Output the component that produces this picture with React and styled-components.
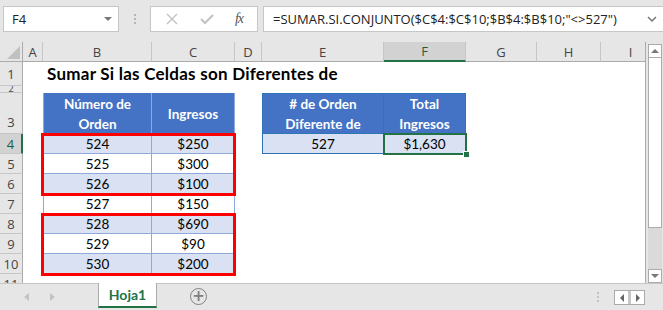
import styled, { createGlobalStyle } from "styled-components";

const GlobalStyle = createGlobalStyle`
  html, body { margin: 0; padding: 0; background: #fff; }
  body { width: 663px; height: 310px; overflow: hidden; font-family: "Open Sans", sans-serif; }
`;

const GREEN = "#217346";
const CELL_FONT = `Lato, "Open Sans", sans-serif`;

const COLS = ["A", "B", "C", "D", "E", "F", "G", "H", "I"];
const ROWS = [1, 2, 3, 4, 5, 6, 7, 8, 9, 10, 11];

const ORDERS = [
  ["524", "$250"],
  ["525", "$300"],
  ["526", "$100"],
  ["527", "$150"],
  ["528", "$690"],
  ["529", "$90"],
  ["530", "$200"],
];

const Window = styled.div`
  width: 663px;
  height: 310px;
  display: flex;
  flex-direction: column;
  background: #e6e6e6;
  overflow: hidden;
`;

/* ---------- formula bar ---------- */
const FormulaBar = styled.div`
  height: 42px;
  flex: none;
  display: flex;
  align-items: flex-start;
  padding: 6px 0 0 3px;
  box-sizing: border-box;
`;

const NameBox = styled.div`
  width: 116px;
  height: 26px;
  box-sizing: border-box;
  background: #fff;
  border: 1px solid #c6c6c6;
  display: flex;
  align-items: center;
  justify-content: space-between;
  padding: 0 6px 0 8px;
  font-size: 13px;
  color: #222;
`;

const Caret = styled.span`
  width: 0;
  height: 0;
  border-left: 4px solid transparent;
  border-right: 4px solid transparent;
  border-top: 4px solid #777;
`;

const Grip = styled.div`
  width: 31px;
  height: 26px;
  display: flex;
  flex-direction: column;
  align-items: center;
  justify-content: center;
  gap: 2px;
  span {
    width: 2px;
    height: 2px;
    background: #b4b4b4;
  }
`;

const FxBox = styled.div`
  width: 108px;
  height: 26px;
  box-sizing: border-box;
  background: #fff;
  border: 1px solid #c6c6c6;
  display: flex;
  align-items: center;
  justify-content: space-around;
  padding: 0 4px;
`;

const FxLabel = styled.span`
  font-family: "Liberation Serif", serif;
  font-style: italic;
  font-size: 14px;
  color: #555;
  letter-spacing: -1px;
`;

const FormulaInput = styled.div`
  flex: 1;
  height: 26px;
  margin-left: 5px;
  box-sizing: border-box;
  background: #fff;
  border: 1px solid #c6c6c6;
  border-right: none;
  display: flex;
  align-items: center;
  justify-content: space-between;
  padding: 0 6px 0 9px;
  font-size: 13px;
  color: #222;
  white-space: nowrap;
`;

/* ---------- sheet ---------- */
const Main = styled.div`
  height: 241px;
  flex: none;
  display: flex;
`;

const Sheet = styled.div`
  width: 646px;
  height: 241px;
  box-sizing: border-box;
  border-right: 1px solid #ababab;
  overflow: hidden;
  background: #fff;
  display: grid;
  grid-template-columns: 23px 20px 109px 83px 27px 122px 82px 71px 64px 60px;
  grid-template-rows: 20px 24px 7px 41px repeat(8, 20px);
`;

const Corner = styled.div`
  grid-column: 1;
  grid-row: 1;
  background: #e6e6e6;
  border-right: 1px solid #ababab;
  border-bottom: 1px solid #ababab;
  box-sizing: border-box;
  display: flex;
  align-items: flex-end;
  justify-content: flex-end;
  padding: 0 2px 2px 0;
  &::after {
    content: "";
    width: 0;
    height: 0;
    border-left: 13px solid transparent;
    border-bottom: 13px solid #c0c0c0;
  }
`;

const ColHead = styled.div`
  grid-column: ${(p) => p.$c};
  grid-row: 1;
  box-sizing: border-box;
  background: ${(p) => (p.$sel ? "#d2d2d2" : "#e6e6e6")};
  border-right: 1px solid #c6c6c6;
  border-bottom: ${(p) => (p.$sel ? `2px solid ${GREEN}` : "1px solid #ababab")};
  display: flex;
  align-items: center;
  justify-content: center;
  font-size: 13px;
  color: ${(p) => (p.$sel ? "#1d5c38" : "#444")};
`;

const RowHead = styled.div`
  grid-column: 1;
  grid-row: ${(p) => p.$r};
  box-sizing: border-box;
  background: ${(p) => (p.$sel ? "#d2d2d2" : "#e6e6e6")};
  border-bottom: 1px solid #c6c6c6;
  border-right: ${(p) => (p.$sel ? `2px solid ${GREEN}` : "1px solid #ababab")};
  display: flex;
  align-items: ${(p) => (p.$tall ? "flex-end" : "center")};
  justify-content: center;
  padding-bottom: ${(p) => (p.$tall ? "3px" : "0")};
  overflow: hidden;
  font-size: ${(p) => (p.$short ? "9px" : "13px")};
  line-height: ${(p) => (p.$short ? "6px" : "16px")};
  color: ${(p) => (p.$sel ? "#1d5c38" : "#444")};
`;

const Title = styled.div`
  grid-column: 3 / span 6;
  grid-row: 2;
  display: flex;
  align-items: flex-end;
  padding: 0 0 2px 4px;
  font-family: ${CELL_FONT};
  font-weight: 700;
  font-size: 17px;
  letter-spacing: 0.25px;
  color: #000;
  white-space: nowrap;
`;

const HeadCell = styled.div`
  grid-column: ${(p) => p.$c};
  grid-row: ${(p) => p.$r};
  box-sizing: border-box;
  background: #4472c4;
  border-right: 1px solid ${(p) => p.$line};
  border-left: ${(p) => (p.$first ? `1px solid ${p.$line}` : "none")};
  border-top: ${(p) => (p.$outer ? `1px solid ${p.$line}` : "none")};
  display: flex;
  align-items: center;
  justify-content: center;
  text-align: center;
  font-family: ${CELL_FONT};
  font-weight: 700;
  font-size: 13.5px;
  line-height: 20px;
  color: #fff;
`;

const DataCell = styled.div`
  grid-column: ${(p) => p.$c};
  grid-row: ${(p) => p.$r};
  box-sizing: border-box;
  background: ${(p) => (p.$alt ? "#d9e1f2" : "#fff")};
  border-right: 1px solid ${(p) => p.$line};
  border-bottom: 1px solid ${(p) => p.$line};
  border-left: ${(p) => (p.$first ? `1px solid ${p.$line}` : "none")};
  border-top: 1px solid ${(p) => p.$line};
  margin-top: -1px;
  display: flex;
  align-items: center;
  justify-content: center;
  padding-top: 1px;
  font-family: ${CELL_FONT};
  font-size: 13.5px;
  color: #000;
`;

const RedBox = styled.div`
  grid-column: 3 / span 2;
  grid-row: ${(p) => p.$r} / span ${(p) => p.$span};
  margin: -1px -1px -2px -2px;
  border: 3px solid #ff0000;
  z-index: 2;
  pointer-events: none;
`;

const Selection = styled.div`
  grid-column: 7;
  grid-row: 5;
  margin: -1px -1px -1px -1px;
  border: 2px solid ${GREEN};
  z-index: 3;
  position: relative;
  &::after {
    content: "";
    position: absolute;
    right: -5px;
    bottom: -5px;
    width: 5px;
    height: 5px;
    background: ${GREEN};
    border: 1px solid #fff;
  }
`;

/* ---------- vertical scroll ---------- */
const VScroll = styled.div`
  flex: 1;
  display: flex;
  flex-direction: column;
  align-items: center;
  padding: 2px 0 0 1px;
  background: #e6e6e6;
`;

const ScrollBtn = styled.div`
  width: 14px;
  height: 14px;
  flex: none;
  box-sizing: border-box;
  background: #fff;
  border: 1px solid #ababab;
  display: flex;
  align-items: center;
  justify-content: center;
  &::after {
    content: "";
    border-left: 4px solid transparent;
    border-right: 4px solid transparent;
    ${(p) => (p.$up ? "border-bottom: 4px solid #777;" : "border-top: 4px solid #777;")}
  }
`;

const Thumb = styled.div`
  width: 14px;
  height: 170px;
  box-sizing: border-box;
  background: #fff;
  border: 1px solid #ababab;
  border-top: none;
`;

const Track = styled.div`
  flex: 1;
  width: 14px;
  background: #dadada;
`;

/* ---------- sheet tabs ---------- */
const TabBar = styled.div`
  flex: 1;
  display: flex;
  align-items: flex-start;
  border-top: 1px solid #c6c6c6;
  box-sizing: border-box;
`;

const TabNav = styled.div`
  width: 98px;
  height: 26px;
  display: flex;
  align-items: center;
  padding-left: 24px;
  gap: 21px;
  box-sizing: border-box;
`;

const NavArrow = styled.span`
  width: 0;
  height: 0;
  border-top: 4px solid transparent;
  border-bottom: 4px solid transparent;
  ${(p) => (p.$left ? "border-right: 5px solid #c2c2c2;" : "border-left: 5px solid #c2c2c2;")}
`;

const Tab = styled.div`
  width: 59px;
  height: 25px;
  margin-top: -1px;
  box-sizing: border-box;
  background: #fff;
  border-left: 1px solid #ababab;
  border-right: 1px solid #ababab;
  border-bottom: 2px solid ${GREEN};
  display: flex;
  align-items: center;
  justify-content: center;
  font-family: ${CELL_FONT};
  font-weight: 700;
  font-size: 14px;
  color: ${GREEN};
`;

const AddSheet = styled.div`
  width: 17px;
  height: 17px;
  margin: 4px 0 0 33px;
  box-sizing: border-box;
  border: 1.5px solid #808080;
  border-radius: 50%;
  display: flex;
  align-items: center;
  justify-content: center;
  font-family: "DejaVu Sans", sans-serif;
  font-size: 15px;
  font-weight: 700;
  line-height: 1;
  color: #808080;
`;

const Spacer = styled.div`
  flex: 1;
`;

const Dots = styled(Grip)`
  width: 4px;
  height: 26px;
  margin-right: 14px;
  span {
    background: #c2c2c2;
  }
`;

const HScrollBtns = styled.div`
  display: flex;
  margin: 6px 18px 0 0;
  height: 15px;
  border: 1px solid #ababab;
  box-sizing: border-box;
  background: #c6c6c6;
  gap: 3px;
`;

const HBtn = styled.div`
  width: 13px;
  background: #fff;
  display: flex;
  align-items: center;
  justify-content: center;
  &::after {
    content: "";
    border-top: 4px solid transparent;
    border-bottom: 4px solid transparent;
    ${(p) => (p.$left ? "border-right: 4px solid #666;" : "border-left: 4px solid #666;")}
  }
`;

function Table1() {
  const line = "#8ea9db";
  return (
    <>
      <HeadCell $c={3} $r={4} $line={line} $first>
        Número de
        <br />
        Orden
      </HeadCell>
      <HeadCell $c={4} $r={4} $line={line}>
        Ingresos
      </HeadCell>
      {ORDERS.flatMap(([num, amt], i) => [
        <DataCell key={`n${i}`} $c={3} $r={5 + i} $line={line} $alt={i % 2 === 0} $first>
          {num}
        </DataCell>,
        <DataCell key={`a${i}`} $c={4} $r={5 + i} $line={line} $alt={i % 2 === 0}>
          {amt}
        </DataCell>,
      ])}
    </>
  );
}

function Table2() {
  const line = "#2f75b5";
  return (
    <>
      <HeadCell $c={6} $r={4} $line={line} $first $outer>
        # de Orden
        <br />
        Diferente de
      </HeadCell>
      <HeadCell $c={7} $r={4} $line={line} $outer>
        Total
        <br />
        Ingresos
      </HeadCell>
      <DataCell $c={6} $r={5} $line={line} $alt $first>
        527
      </DataCell>
      <DataCell $c={7} $r={5} $line={line} $alt>
        $1,630
      </DataCell>
    </>
  );
}

export default function App() {
  return (
    <Window>
      <GlobalStyle />
      <FormulaBar>
        <NameBox>
          F4
          <Caret />
        </NameBox>
        <Grip>
          <span />
          <span />
          <span />
        </Grip>
        <FxBox>
          <svg width="14" height="14" viewBox="0 0 14 14">
            <path d="M2 2 L12 12 M12 2 L2 12" stroke="#c2c2c2" strokeWidth="1.4" fill="none" />
          </svg>
          <svg width="16" height="14" viewBox="0 0 16 14">
            <path d="M2 7 L6 11 L14 3" stroke="#c2c2c2" strokeWidth="2" fill="none" />
          </svg>
          <FxLabel>fx</FxLabel>
        </FxBox>
        <FormulaInput>
          =SUMAR.SI.CONJUNTO($C$4:$C$10;$B$4:$B$10;"&lt;&gt;527")
          <svg width="10" height="8" viewBox="0 0 10 8">
            <path d="M1 2 L5 6 L9 2" stroke="#777" strokeWidth="1.5" fill="none" />
          </svg>
        </FormulaInput>
      </FormulaBar>

      <Main>
        <Sheet>
          <Corner />
          {COLS.map((c, i) => (
            <ColHead key={c} $c={i + 2} $sel={c === "F"}>
              {c}
            </ColHead>
          ))}
          {ROWS.map((r) => (
            <RowHead key={r} $r={r + 1} $sel={r === 4} $tall={r === 3} $short={r === 2}>
              {r}
            </RowHead>
          ))}
          <Title>Sumar Si las Celdas son Diferentes de</Title>
          <Table1 />
          <Table2 />
          <RedBox $r={5} $span={3} />
          <RedBox $r={9} $span={3} />
          <Selection />
        </Sheet>
        <VScroll>
          <ScrollBtn $up />
          <Thumb />
          <Track />
          <ScrollBtn />
        </VScroll>
      </Main>

      <TabBar>
        <TabNav>
          <NavArrow $left />
          <NavArrow />
        </TabNav>
        <Tab>Hoja1</Tab>
        <AddSheet>+</AddSheet>
        <Spacer />
        <Dots>
          <span />
          <span />
          <span />
        </Dots>
        <HScrollBtns>
          <HBtn $left />
          <HBtn />
        </HScrollBtns>
      </TabBar>
    </Window>
  );
}
